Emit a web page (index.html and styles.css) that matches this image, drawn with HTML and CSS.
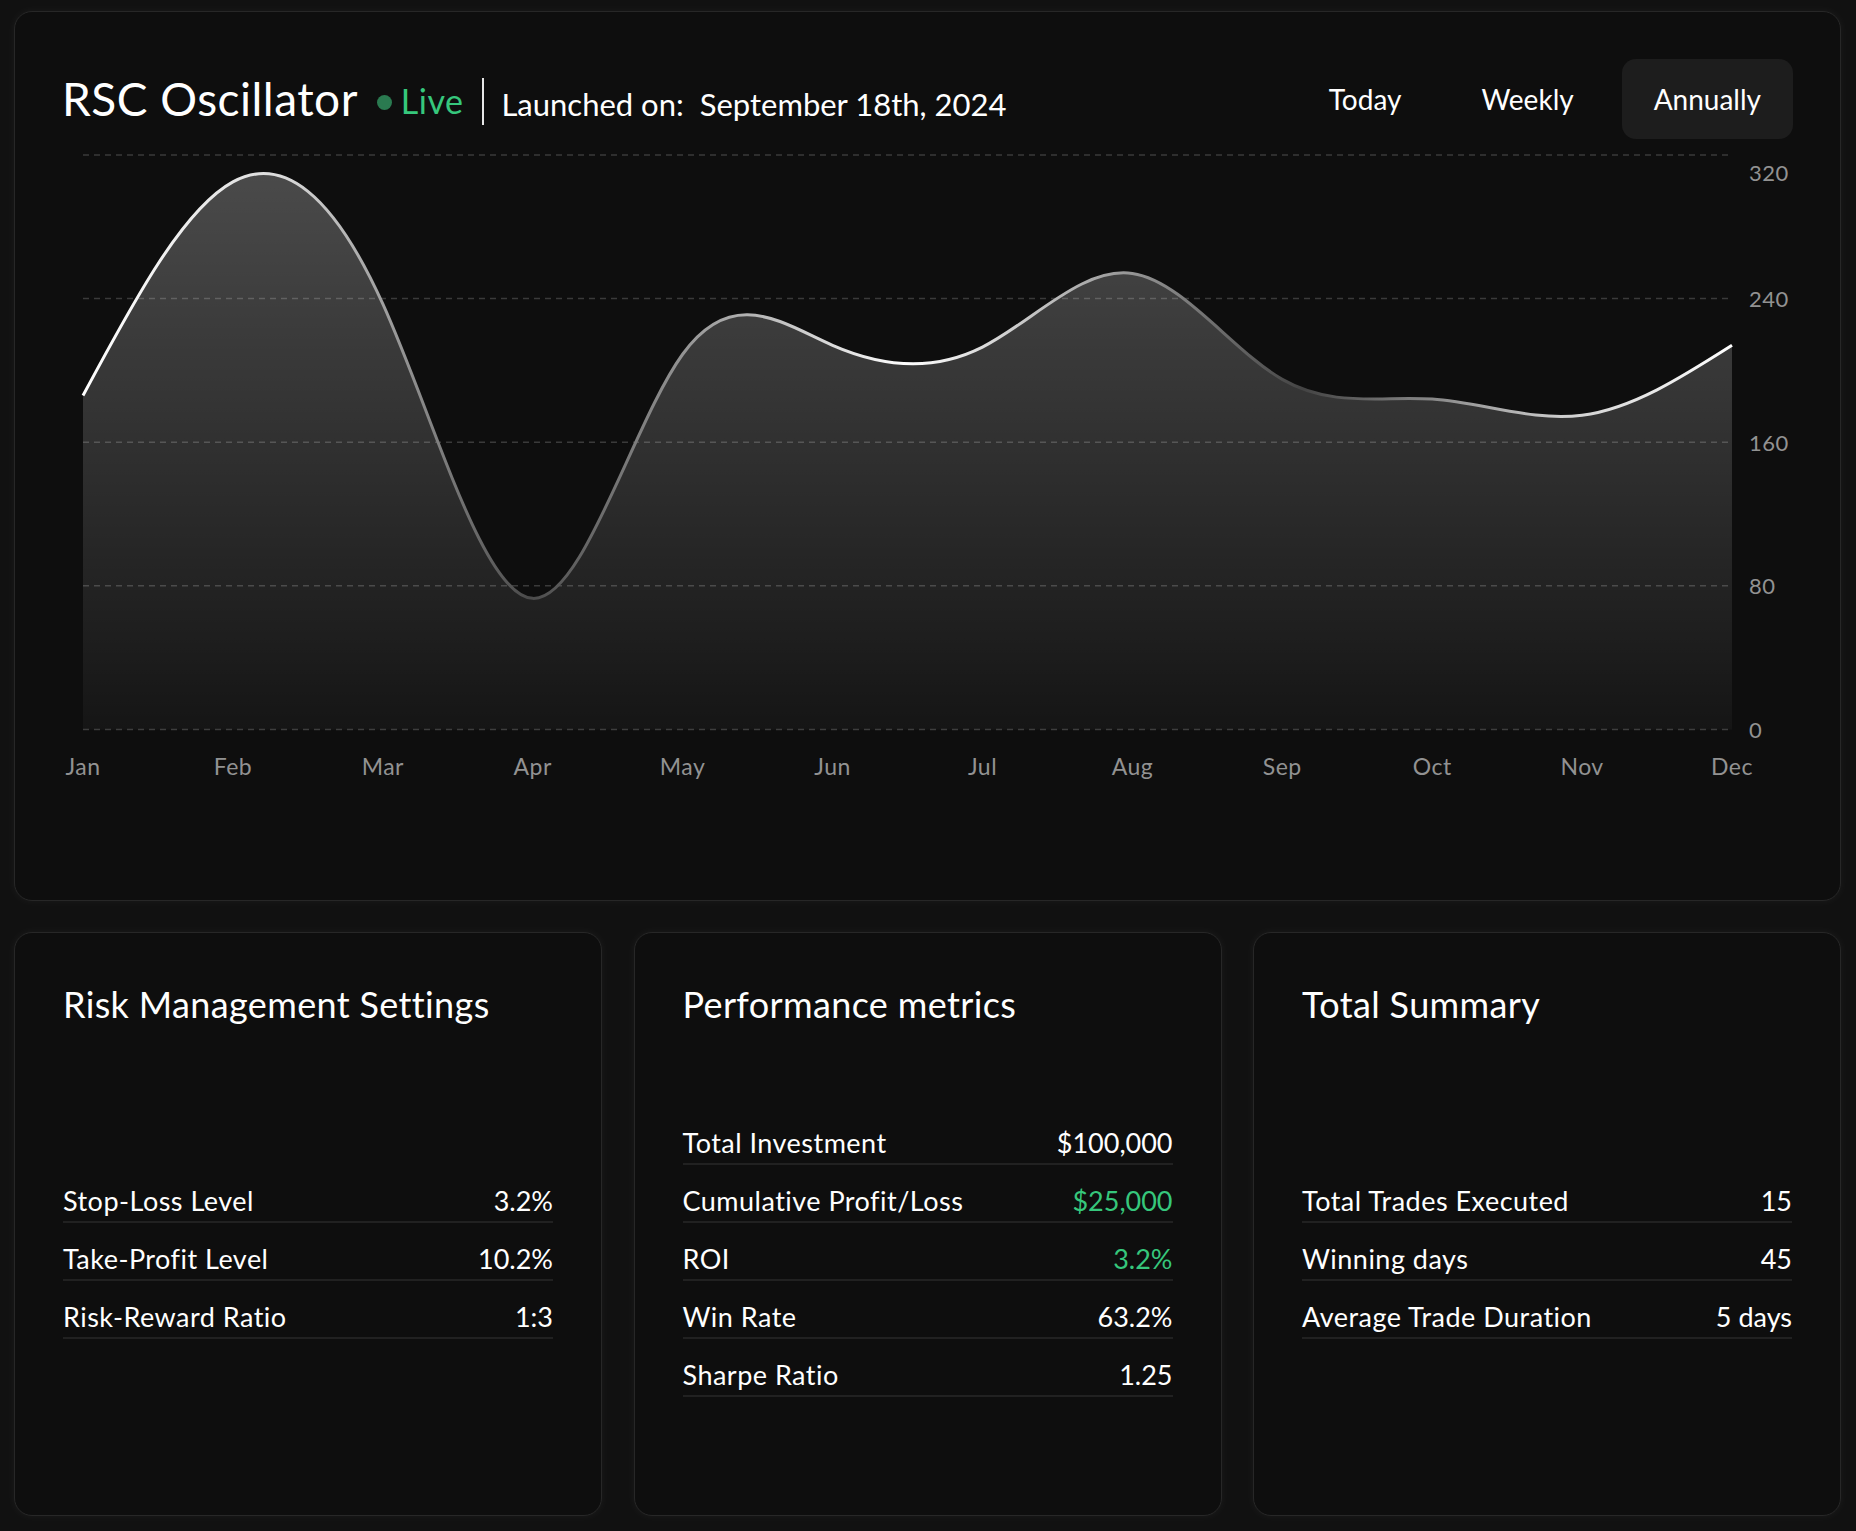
FILE: index.html
```html
<!DOCTYPE html>
<html lang="en">
<head>
<meta charset="utf-8">
<title>RSC Oscillator</title>
<link rel="stylesheet" href="styles.css">
</head>
<body>
<main class="page">
  <section class="card chart-card">
    <header class="chart-head">
      <div class="title-group">
        <h1 class="title">RSC Oscillator</h1>
        <span class="live"><span class="live-dot"></span>Live</span>
        <span class="divider"></span>
        <span class="launched">Launched on:<span class="date">September 18th, 2024</span></span>
      </div>
      <nav class="range">
        <button class="range-btn">Today</button>
        <button class="range-btn">Weekly</button>
        <button class="range-btn active">Annually</button>
      </nav>
    </header>
    <svg class="chart" width="1731" height="713" viewBox="0 0 1731 713">
      <defs>
        <linearGradient id="areaFill" x1="0" y1="0" x2="0" y2="1">
          <stop offset="0" stop-color="#ffffff" stop-opacity="0.25"/>
          <stop offset="1" stop-color="#ffffff" stop-opacity="0.03"/>
        </linearGradient>
        <linearGradient id="lineStroke" gradientUnits="userSpaceOnUse" x1="21" y1="0" x2="1670" y2="0">
          <stop offset="0" stop-color="#ffffff"/>
          <stop offset="0.12" stop-color="#dcdcdc"/>
          <stop offset="0.27" stop-color="#4a4a4a"/>
          <stop offset="0.5" stop-color="#ffffff"/>
          <stop offset="0.74" stop-color="#444444"/>
          <stop offset="0.9" stop-color="#d0d0d0"/>
          <stop offset="1" stop-color="#ffffff"/>
        </linearGradient>
      </defs>
      <g class="grid">
        <line x1="21" y1="16" x2="1670" y2="16"/>
        <line x1="21" y1="159.6" x2="1670" y2="159.6"/>
        <line x1="21" y1="303.2" x2="1670" y2="303.2"/>
        <line x1="21" y1="446.8" x2="1670" y2="446.8"/>
        <line x1="21" y1="590.4" x2="1670" y2="590.4"/>
      </g>
      <path id="area" class="area" d=""/>
      <path id="line" class="line" d=""/>
      <g class="ylabels">
        <text x="1687" y="33">320</text>
        <text x="1687" y="159.6">240</text>
        <text x="1687" y="303.2">160</text>
        <text x="1687" y="446.8">80</text>
        <text x="1687" y="590.4">0</text>
      </g>
      <g class="xlabels">
        <text x="21" y="627">Jan</text>
        <text x="170.9" y="627">Feb</text>
        <text x="320.8" y="627">Mar</text>
        <text x="470.7" y="627">Apr</text>
        <text x="620.6" y="627">May</text>
        <text x="770.5" y="627">Jun</text>
        <text x="920.5" y="627">Jul</text>
        <text x="1070.4" y="627">Aug</text>
        <text x="1220.3" y="627">Sep</text>
        <text x="1370.2" y="627">Oct</text>
        <text x="1520.1" y="627">Nov</text>
        <text x="1670" y="627">Dec</text>
      </g>
    </svg>
  </section>

  <div class="stats">
    <section class="card stat-card">
      <h2 class="stat-title">Risk Management Settings</h2>
      <div class="rows">
        <div class="row"><span>Stop-Loss Level</span><span>3.2%</span></div>
        <div class="row"><span>Take-Profit Level</span><span>10.2%</span></div>
        <div class="row"><span>Risk-Reward Ratio</span><span>1:3</span></div>
      </div>
    </section>
    <section class="card stat-card">
      <h2 class="stat-title">Performance metrics</h2>
      <div class="rows">
        <div class="row"><span>Total Investment</span><span>$100,000</span></div>
        <div class="row"><span>Cumulative Profit/Loss</span><span class="pos">$25,000</span></div>
        <div class="row"><span>ROI</span><span class="pos">3.2%</span></div>
        <div class="row"><span>Win Rate</span><span>63.2%</span></div>
        <div class="row"><span>Sharpe Ratio</span><span>1.25</span></div>
      </div>
    </section>
    <section class="card stat-card">
      <h2 class="stat-title">Total Summary</h2>
      <div class="rows">
        <div class="row"><span>Total Trades Executed</span><span>15</span></div>
        <div class="row"><span>Winning days</span><span>45</span></div>
        <div class="row"><span>Average Trade Duration</span><span>5 days</span></div>
      </div>
    </section>
  </div>
</main>
<script src="chart.js"></script>
</body>
</html>
```
FILE: styles.css
```css
* { box-sizing: border-box; margin: 0; padding: 0; }
html, body { background: #111111; }
body {
  font-family: Lato, "Noto Sans", sans-serif;
  color: #ffffff;
  letter-spacing: 0.03em;
}
.page {
  display: flex;
  flex-direction: column;
  gap: 31px;
  height: 1531px;
  padding: 11px 15px 15px 14px;
}
.card {
  background: #0e0e0e;
  border: 1px solid #272727;
  border-radius: 18px;
  box-shadow: 0 0 10px rgba(255, 255, 255, 0.05);
}
.chart-card {
  height: 890px;
  padding: 47px;
  display: flex;
  flex-direction: column;
}
.chart-head {
  display: flex;
  justify-content: space-between;
  align-items: center;
  height: 80px;
}
.title-group {
  display: flex;
  align-items: center;
}
.title {
  font-size: 46px;
  font-weight: 400;
  line-height: 1.2;
  margin-right: 19px;
}
.live {
  display: flex;
  align-items: center;
  font-size: 34px;
  color: #36c77c;
  line-height: 1.2;
  margin-top: 4px;
}
.live-dot {
  width: 15px;
  height: 15px;
  border-radius: 50%;
  background: #2a7a50;
  margin-right: 9px;
  margin-top: 4px;
}
.divider {
  width: 2px;
  height: 47px;
  background: #e6e6e6;
  margin: 4px 17px 0 19px;
}
.launched {
  font-size: 31px;
  line-height: 1.2;
  letter-spacing: 0;
  margin-top: 12px;
}
.date { margin-left: 16px; }
.range {
  display: flex;
  gap: 16px;
}
.range-btn {
  font-family: inherit;
  letter-spacing: 0;
  font-size: 28px;
  color: #ffffff;
  background: transparent;
  border: none;
  height: 80px;
  padding: 0 32px;
  border-radius: 14px;
}
.range-btn.active { background: #1d1d1d; }
.chart { display: block; overflow: visible; }
.grid line {
  stroke: #3a3a3a;
  stroke-width: 1.5;
  stroke-dasharray: 6 5;
}
.area { fill: url(#areaFill); }
.line {
  fill: none;
  stroke: url(#lineStroke);
  stroke-width: 3;
}
.ylabels text, .xlabels text {
  fill: #929292;
  font-family: Lato, "Noto Sans", sans-serif;
  dominant-baseline: central;
}
.ylabels text { font-size: 22px; }
.xlabels text { font-size: 23px; text-anchor: middle; }

.stats {
  flex: 1;
  display: grid;
  grid-template-columns: repeat(3, 1fr);
  gap: 31.5px;
}
.stat-card {
  display: flex;
  flex-direction: column;
  padding: 50px 48px 37px;
}
.stat-title {
  font-size: 36px;
  font-weight: 400;
  line-height: 43px;
  letter-spacing: 0.01em;
}
.rows {
  flex: 1;
  display: flex;
  flex-direction: column;
  justify-content: center;
}
.row {
  display: flex;
  justify-content: space-between;
  font-size: 27px;
  line-height: 32px;
  padding: 20px 0 4px;
  border-bottom: 2px solid #212121;
}
.row span:last-child { letter-spacing: 0; }
.pos { color: #36c77c; }
```
FILE: chart.js
```js
(function () {
  var vals = [186, 305, 237, 73, 209, 214, 213, 254, 195, 184, 175, 214];
  var x0 = 21, dx = (1670 - 21) / 11, yb = 590.4, k = 574.4 / 320;
  var xs = vals.map(function (v, i) { return x0 + i * dx; });
  var ys = vals.map(function (v) { return yb - v * k; });

  function ctrl(x) {
    var n = x.length - 1, a = new Array(n), b = new Array(n), r = new Array(n), i, m;
    a[0] = 0; b[0] = 2; r[0] = x[0] + 2 * x[1];
    for (i = 1; i < n - 1; ++i) { a[i] = 1; b[i] = 4; r[i] = 4 * x[i] + 2 * x[i + 1]; }
    a[n - 1] = 2; b[n - 1] = 7; r[n - 1] = 8 * x[n - 1] + x[n];
    for (i = 1; i < n; ++i) { m = a[i] / b[i - 1]; b[i] -= m; r[i] -= m * r[i - 1]; }
    a[n - 1] = r[n - 1] / b[n - 1];
    for (i = n - 2; i >= 0; --i) a[i] = (r[i] - a[i + 1]) / b[i];
    b[n - 1] = (x[n] + a[n - 1]) / 2;
    for (i = 0; i < n - 1; ++i) b[i] = 2 * x[i + 1] - a[i + 1];
    return [a, b];
  }

  var px = ctrl(xs), py = ctrl(ys);
  var d = 'M' + xs[0].toFixed(2) + ',' + ys[0].toFixed(2);
  for (var i = 0; i < xs.length - 1; i++) {
    d += 'C' + px[0][i].toFixed(2) + ',' + py[0][i].toFixed(2) + ' ' +
         px[1][i].toFixed(2) + ',' + py[1][i].toFixed(2) + ' ' +
         xs[i + 1].toFixed(2) + ',' + ys[i + 1].toFixed(2);
  }
  document.getElementById('line').setAttribute('d', d);
  document.getElementById('area').setAttribute('d',
    d + 'L' + xs[xs.length - 1].toFixed(2) + ',' + yb + 'L' + xs[0].toFixed(2) + ',' + yb + 'Z');
})();
```
